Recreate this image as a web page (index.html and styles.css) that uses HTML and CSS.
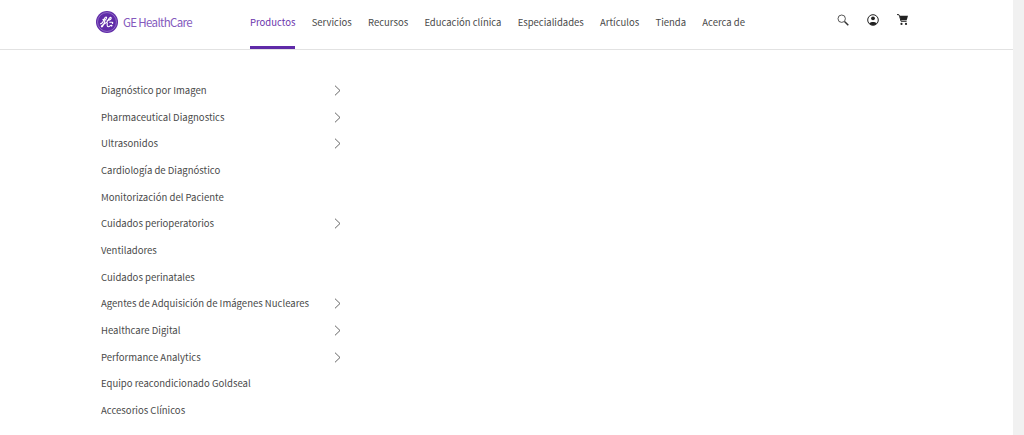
FILE: index.html
```html
<!DOCTYPE html>
<html lang="es">
<head>
<meta charset="utf-8">
<title>GE HealthCare</title>
<link rel="stylesheet" href="styles.css">
</head>
<body>
<div class="page">
  <header class="header">
    <a class="brand">
      <svg class="logo" viewBox="0 0 24 24" width="22" height="22"><circle cx="12" cy="12" r="12" fill="#5f2aa8"/><circle cx="12" cy="12" r="10.300" fill="none" stroke="#cbb6e6" stroke-width=".5"/><path d="M4.500 14c1.500 0 2.500-1 3.200-2.500C8.500 9.500 9.500 6.500 11 6.500c1 0 .5 2-.5 2.800-1.200.9-2.800.5-3.200-.5M10 9.500c-.5 2.500-1.500 5.500-3 7.500-.8.8-1.700-.2-.7-1.100 1.700-1.600 4.500-2.400 6-4.400 1-1.800 2.300-4.500 3.700-4.500 1 0 .6 1.600-.3 2.300-1.100.9-2.700 1-4 1M12.500 12.500c-.5 2-.6 4.500.8 4.700 1.500.2 2.200-1.500 3.200-1.700 1.200-.2 1.200 1 .2 1.300M14.500 12.300c1 .2 2.500-.2 3.200 0 1 .3 .5 1.300-.3 1.300" fill="none" stroke="#fff" stroke-width="1.200"/></svg>
      <span class="brand-name">GE HealthCare</span>
    </a>
    <nav class="nav">
      <a class="nav-item active">Productos</a>
      <a class="nav-item">Servicios</a>
      <a class="nav-item">Recursos</a>
      <a class="nav-item">Educación clínica</a>
      <a class="nav-item">Especialidades</a>
      <a class="nav-item">Artículos</a>
      <a class="nav-item">Tienda</a>
      <a class="nav-item">Acerca de</a>
    </nav>
    <div class="tools">
      <svg viewBox="0 0 12 12" width="12" height="12"><circle cx="4.700" cy="4.700" r="3.700" fill="none" stroke="#444" stroke-width=".9"/><path d="M7.500 7.500l3.800 3.800" stroke="#333" stroke-width="1.500"/></svg>
      <svg viewBox="0 0 12 12" width="12" height="12"><circle cx="6" cy="6" r="5.300" fill="none" stroke="#222" stroke-width="1"/><circle cx="6" cy="4.300" r="1.900" fill="#222"/><path d="M2.300 9.500C3 7.500 9 7.500 9.700 9.500 8 11.500 4 11.500 2.300 9.500z" fill="#222"/></svg>
      <svg viewBox="0 0 12 12" width="12" height="12"><path d="M0 .6h1.800l.8 1.700 1.500 5h5.500" fill="none" stroke="#222" stroke-width="1"/><path d="M2.500 1.800H11L9.700 6.300H3.900z" fill="#222"/><circle cx="4.500" cy="9.900" r="1.100" fill="#222"/><circle cx="9" cy="9.900" r="1.100" fill="#222"/></svg>
    </div>
  </header>
  <ul class="menu">
    <li class="row">Diagnóstico por Imagen<svg class="chev" viewBox="0 0 7 11" width="7" height="11"><path d="M1 .7l5 4.800-5 4.800" fill="none" stroke="#555" stroke-width=".9"/></svg></li>
    <li class="row">Pharmaceutical Diagnostics<svg class="chev" viewBox="0 0 7 11" width="7" height="11"><path d="M1 .7l5 4.800-5 4.800" fill="none" stroke="#555" stroke-width=".9"/></svg></li>
    <li class="row">Ultrasonidos<svg class="chev" viewBox="0 0 7 11" width="7" height="11"><path d="M1 .7l5 4.800-5 4.800" fill="none" stroke="#555" stroke-width=".9"/></svg></li>
    <li class="row">Cardiología de Diagnóstico</li>
    <li class="row">Monitorización del Paciente</li>
    <li class="row">Cuidados perioperatorios<svg class="chev" viewBox="0 0 7 11" width="7" height="11"><path d="M1 .7l5 4.800-5 4.800" fill="none" stroke="#555" stroke-width=".9"/></svg></li>
    <li class="row">Ventiladores</li>
    <li class="row">Cuidados perinatales</li>
    <li class="row">Agentes de Adquisición de Imágenes Nucleares<svg class="chev" viewBox="0 0 7 11" width="7" height="11"><path d="M1 .7l5 4.800-5 4.800" fill="none" stroke="#555" stroke-width=".9"/></svg></li>
    <li class="row">Healthcare Digital<svg class="chev" viewBox="0 0 7 11" width="7" height="11"><path d="M1 .7l5 4.800-5 4.800" fill="none" stroke="#555" stroke-width=".9"/></svg></li>
    <li class="row">Performance Analytics<svg class="chev" viewBox="0 0 7 11" width="7" height="11"><path d="M1 .7l5 4.800-5 4.800" fill="none" stroke="#555" stroke-width=".9"/></svg></li>
    <li class="row">Equipo reacondicionado Goldseal</li>
    <li class="row">Accesorios Clínicos</li>
  </ul>
</div>
</body>
</html>
```
FILE: styles.css
```css
html, body { margin: 0; height: 100%; overflow: hidden; background: #f1f1f1; }
body { font-family: "Noto Sans CJK SC", "Noto Sans", sans-serif; color: #4a4a4a; }
.page { width: 1013px; height: 435px; background: #fff; }
.header { height: 49px; border-bottom: 1px solid #e2e2e2; display: flex; align-items: flex-start; padding-left: 96px; }
.brand { display: flex; align-items: center; gap: 5px; width: 154px; height: 44px; }
.logo { flex: none; }
.brand-name { color: #8459bd; font-size: 11.500px; letter-spacing: -.65px; }
.nav { display: flex; gap: 16.250px; }
.nav-item { height: 46px; line-height: 45px; font-size: 9.500px; color: #4a4a4a; white-space: nowrap; }
.nav-item.active { color: #6b35ad; border-bottom: 3px solid #5f2aa8; }
.tools { display: flex; gap: 18px; margin-left: 92px; padding-top: 14px; }
.menu { list-style: none; margin: 0; padding: 27.150px 0 0 101px; width: 240px; }
.row { height: 26.670px; line-height: 26.670px; font-size: 9.550px; display: flex; justify-content: space-between; align-items: center; color: #4a4a4a; white-space: nowrap; }
```
